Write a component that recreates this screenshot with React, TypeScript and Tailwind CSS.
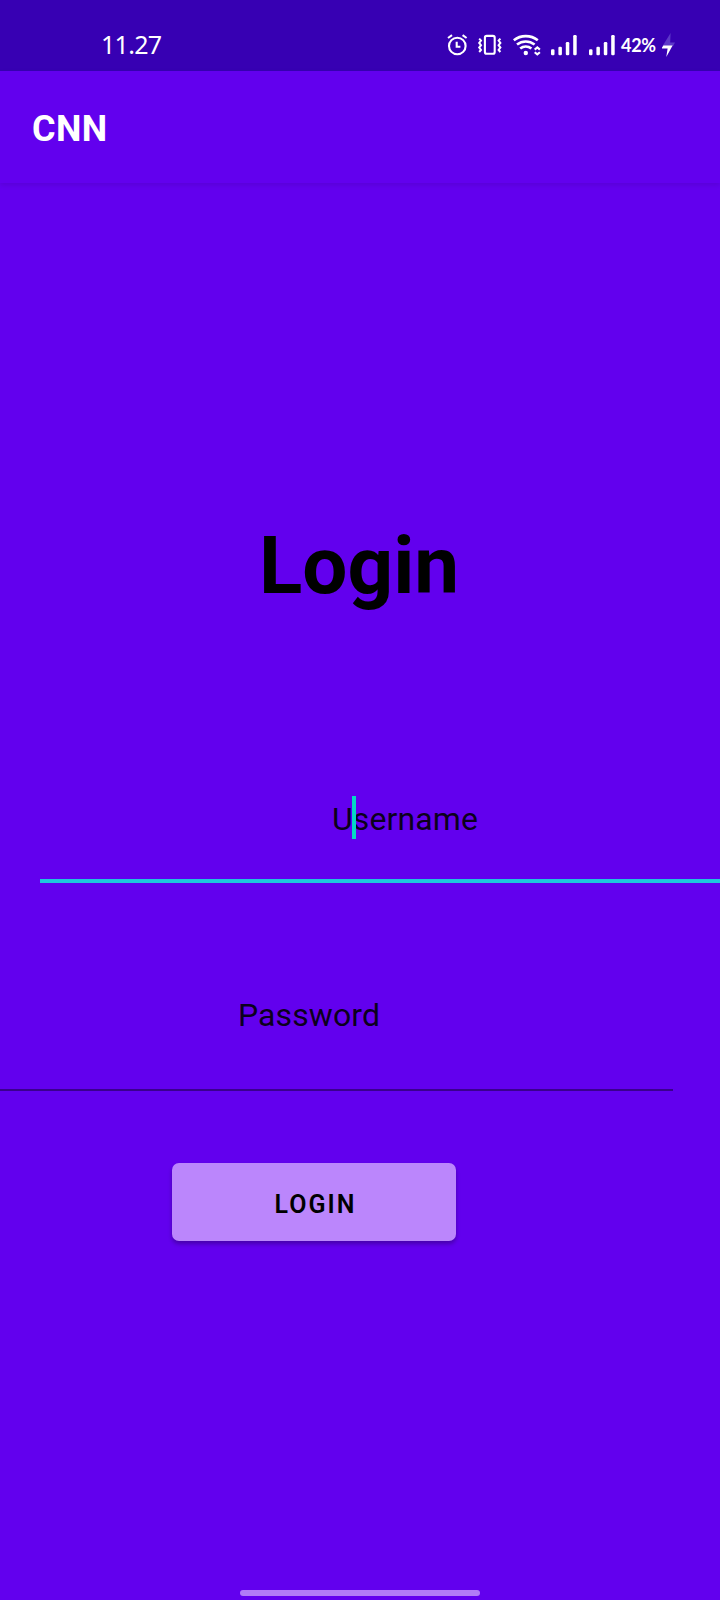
function AlarmIcon() {
  return (
    <svg className="h-[50px] w-[24px] shrink-0" viewBox="446 20 24 50" fill="none" stroke="white" strokeWidth="2.1">
      <circle cx="457.3" cy="46" r="8.3" />
      <path d="M456.7 41.8V46.8H460.4M448 38L452 35.2M462.6 35.2L466.6 38" />
    </svg>
  );
}

function VibrateIcon() {
  return (
    <svg className="h-[50px] w-[34px] shrink-0" viewBox="470 20 34 50" fill="none" stroke="white" strokeWidth="2.1">
      <rect x="484.9" y="35.9" width="9.8" height="17.9" rx="1.8" />
      <path
        strokeWidth="2"
        d="M479.2 38.6L481 40.6L479.2 43L481 45.2L479.2 47.6L481 49.9L479.2 52M500.4 38.6L498.6 40.6L500.4 43L498.6 45.2L500.4 47.6L498.6 49.9L500.4 52"
      />
    </svg>
  );
}

function WifiIcon() {
  return (
    <svg className="h-[50px] w-[42px] shrink-0" viewBox="504 20 42 50" fill="none" stroke="white" strokeWidth="2.6">
      <path d="M513.8 40.2C520.8 34.7 530.8 34.7 537.8 40.2M517 44.5C522.2 40.4 529.3 40.4 534.6 44.5M520.2 48.6C523.5 45.9 528.1 45.9 531.4 48.6" />
      <circle cx="525.8" cy="53" r="2.2" fill="white" stroke="none" />
      <path strokeWidth="2.1" d="M534.7 49.6L537.3 47.4L539.9 49.6M534.7 52.2L537.3 54.4L539.9 52.2" />
    </svg>
  );
}

function SignalIcon() {
  return (
    <svg className="h-[50px] w-[38px] shrink-0" viewBox="546 20 38 50" fill="white">
      <rect x="551" y="49.2" width="3.5" height="6" rx="1.2" />
      <rect x="558.4" y="46.8" width="3.5" height="8.4" rx="1.2" />
      <rect x="565.8" y="42" width="3.5" height="13.2" rx="1.2" />
      <rect x="573.2" y="35" width="3.5" height="20.2" rx="1.2" />
    </svg>
  );
}

function ChargingIcon() {
  return (
    <svg className="h-[50px] w-[16px] shrink-0" viewBox="660 20 16 50">
      <path fill="#5d38c8" d="M669.6 33L661.4 46.2H672L674 42.6H669.2Z" />
      <path fill="white" d="M661 47.4L662.4 45.6H671.6L665.3 57L666.6 48.4H661Z" />
    </svg>
  );
}

function StatusBar() {
  return (
    <header className="flex h-[71px] shrink-0 bg-[#3700b3] pt-5 text-white">
      <span className="ml-[101px] mt-[10px] w-[345px] font-['Noto_Sans',sans-serif] text-[25px] leading-[28px] tracking-[-0.7px]">
        11.27
      </span>
      <AlarmIcon />
      <VibrateIcon />
      <WifiIcon />
      <SignalIcon />
      <SignalIcon />
      <span className="ml-[-1px] mt-[13px] w-[39.5px] whitespace-nowrap font-[Lato,sans-serif] text-[18px] font-bold leading-[24px] tracking-[-0.3px]">
        42%
      </span>
      <ChargingIcon />
    </header>
  );
}

export default function App() {
  return (
    <div className="flex h-[1600px] w-[720px] flex-col overflow-hidden bg-[#6200ee] font-[Roboto,sans-serif] text-black">
      <StatusBar />
      <div className="flex h-28 shrink-0 items-center pl-8 pt-1 text-white shadow-[0_2px_5px_rgba(0,0,0,0.1)]">
        <h1 className="text-[36px] font-bold leading-none tracking-[0.4px]">CNN</h1>
      </div>
      <main className="flex grow flex-col">
        <h2 className="mt-[343px] pl-[259px] text-[80px] font-bold leading-none">Login</h2>
        <div className="ml-10 mt-[190px] h-[87px] border-b-4 border-[#1fc5dd] pl-[292px] pt-[7px]">
          <div className="relative w-fit text-[32px] leading-none tracking-[0.1px] text-black/90">
            Username
            <span className="absolute left-[20px] top-[-7px] h-[43px] w-1 bg-[#03dac5]" />
          </div>
        </div>
        <div className="mt-[96px] h-[112px] w-[673px] border-b-2 border-[#3a008e] pl-[238px] pt-5 text-[32px] leading-none tracking-[0.1px] text-black/90">
          Password
        </div>
        <button className="ml-[172px] mt-[72px] flex h-[78px] w-[284px] items-center justify-center rounded-[7px] bg-[#bb86fc] pl-[3px] pt-[4px] text-[25px] font-semibold leading-none tracking-[2px] shadow-[0_3px_4px_rgba(0,0,0,0.28)]">
          LOGIN
        </button>
        <div className="mb-1 mt-auto h-1.5 w-60 self-center rounded-full bg-[#b27bf7]" />
      </main>
    </div>
  );
}
